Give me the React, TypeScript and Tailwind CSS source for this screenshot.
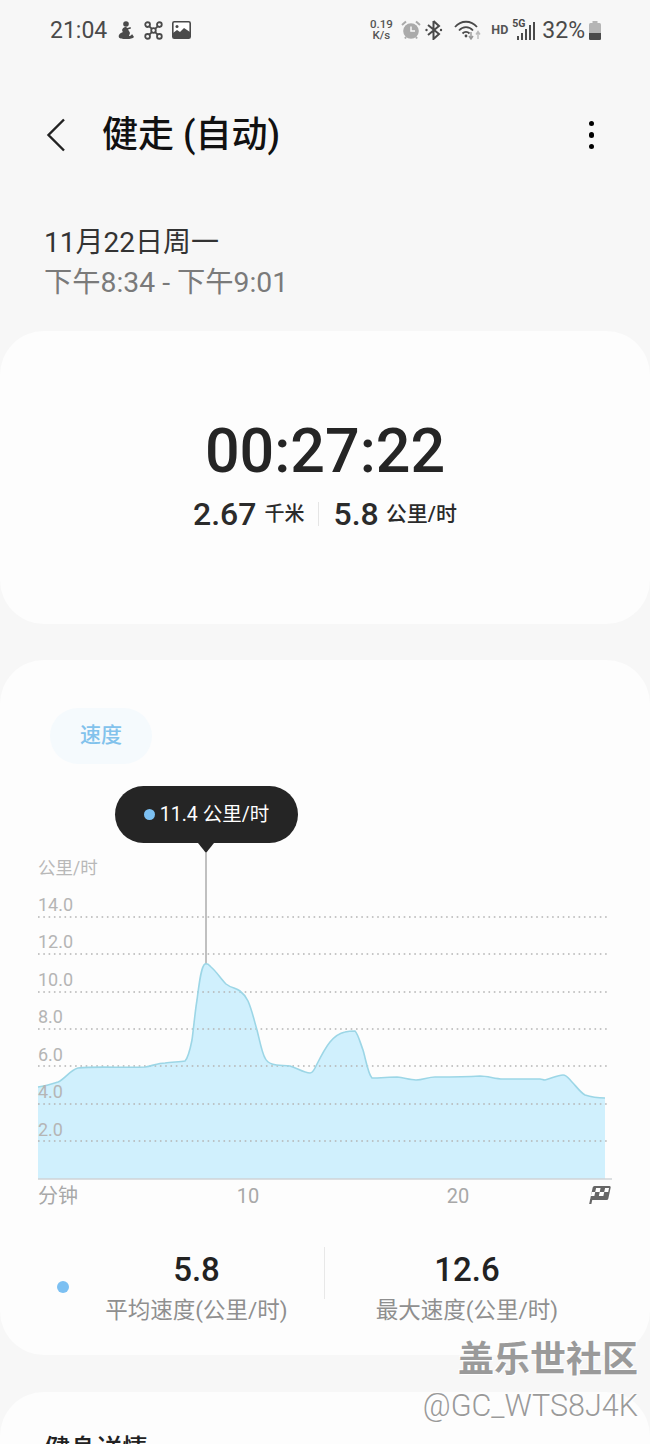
import React from 'react';

const font = { fontFamily: 'Roboto, "Noto Sans CJK SC", sans-serif' };

const curve =
  'M38 1087 C46 1086 52 1084 58 1082 C65 1079 70 1070 78 1068 C95 1066 125 1068 145 1067 C152 1066 158 1063 165 1063 C172 1062 180 1062 185 1061 C188 1058 190 1050 192 1040 C194 1025 195 1012 197 1000 C199 985 201 966 205 964 C208 963 209 965 211 967 C216 971 221 979 226 984 C231 988 236 988 240 991 C244 994 246 997 248 1001 C252 1010 254 1020 257 1030 C260 1042 262 1053 265 1058 C267 1062 269 1063 272 1064 C278 1066 284 1065 290 1066 C297 1068 304 1073 310 1073 C313 1073 314 1070 316 1066 C320 1058 325 1048 330 1042 C335 1036 340 1033 345 1032 C349 1031 352 1031 355 1031 C358 1034 360 1042 363 1050 C366 1060 368 1074 372 1078 C380 1078 390 1077 397 1077 C405 1078 410 1080 416 1080 C423 1080 428 1077 435 1077 C450 1077 465 1077 480 1076 C488 1076 495 1079 503 1079 C515 1079 530 1079 540 1079 C542 1079 543 1080 545 1080 C551 1079 557 1075 563 1075 C567 1075 569 1079 572 1082 C576 1086 580 1092 585 1095 C591 1097 598 1098 605 1098';

const gridYs = [917, 954, 992, 1029, 1066, 1104, 1141];
const yLabels = [
  { t: '14.0', y: 911 },
  { t: '12.0', y: 948 },
  { t: '10.0', y: 986 },
  { t: '8.0', y: 1023 },
  { t: '6.0', y: 1061 },
  { t: '4.0', y: 1098 },
  { t: '2.0', y: 1136 },
];

const StatusBar = () => (
  <div className="flex h-[60px] items-center justify-between pl-[50px] pr-[49px] text-[#4a4a4a]">
    <div className="flex items-center">
      <span className="text-[23px] leading-none">21:04</span>
      {/* figure */}
      <svg viewBox="0 0 16 18" className="ml-[11px] h-[18px] w-[16px]" fill="#4a4a4a">
        <circle cx="8" cy="3" r="2.8" />
        <path d="M7 6 C4 7 3.5 9.5 5 11 C2 12 0 14 1 16.5 C2 18 6 18 9 18 C12 18 15 17.5 16 16 L14 13 C13.5 14.5 12 15 11 15 L12 12 C11.5 10.5 10.5 9.5 10 8.5 L13 7.5 L12.5 6 L9.5 7 C9 6.5 8 6 7 6 Z" />
      </svg>
      {/* nodes */}
      <svg viewBox="0 0 20 20" className="ml-[10px] h-[19px] w-[19px]" fill="none" stroke="#4a4a4a" strokeWidth="1.9">
        <circle cx="10" cy="10" r="2.4" />
        <circle cx="3.8" cy="3.8" r="2.5" />
        <circle cx="16.2" cy="3.8" r="2.5" />
        <circle cx="3.8" cy="16.2" r="2.5" />
        <circle cx="16.2" cy="16.2" r="2.5" />
        <path d="M5.6 5.6 L8.3 8.3 M14.4 5.6 L11.7 8.3 M5.6 14.4 L8.3 11.7 M14.4 14.4 L11.7 11.7" />
      </svg>
      {/* picture */}
      <svg viewBox="0 0 19 18" className="ml-[9px] h-[18px] w-[19px]">
        <rect x="0.8" y="0.8" width="17.4" height="16.4" rx="1.5" fill="#fff" stroke="#4a4a4a" strokeWidth="1.6" />
        <circle cx="5" cy="5.5" r="1.5" fill="#4a4a4a" />
        <path d="M1 15 L1 12 L5 9 L8 11 L12 7 L18 11 L18 17 L1 17 Z" fill="#4a4a4a" />
      </svg>
    </div>
    <div className="flex items-center">
      <div className="flex w-[24px] flex-col items-center text-[11.5px] font-medium leading-[11.5px] text-[#555]">
        <span>0.19</span>
        <span>K/s</span>
      </div>
      {/* alarm */}
      <svg viewBox="0 0 20 20" className="ml-[8px] h-[20px] w-[20px]">
        <circle cx="10" cy="11" r="7.8" fill="#aaa" />
        <path d="M10 6.5 L10 11 L14 11" fill="none" stroke="#f7f7f7" strokeWidth="1.5" />
        <path d="M1 5 L5 1.5 M19 5 L15 1.5 M4 18.5 L5 17 M16 18.5 L15 17" stroke="#aaa" strokeWidth="2" />
      </svg>
      {/* bluetooth */}
      <svg viewBox="0 0 18 20" className="ml-[4px] h-[20px] w-[18px]" fill="none" stroke="#4a4a4a" strokeWidth="2">
        <path d="M8.5 1 L8.5 19 L14 14 L3 5 M8.5 1 L14 6 L3 15" />
        <circle cx="1.5" cy="10" r="1.2" fill="#4a4a4a" stroke="none" />
        <circle cx="16" cy="10" r="1.2" fill="#4a4a4a" stroke="none" />
      </svg>
      {/* wifi */}
      <svg viewBox="0 0 28 20" className="ml-[11px] h-[20px] w-[28px]" fill="none">
        <path d="M1 7 C7 0 17 0 23 7" stroke="#4a4a4a" strokeWidth="1.8" />
        <path d="M5 10.5 C9 6 15 6 19 10.5" stroke="#4a4a4a" strokeWidth="1.8" />
        <path d="M8.5 13.5 C10.5 11.5 13.5 11.5 15.5 13.5" stroke="#4a4a4a" strokeWidth="1.8" />
        <circle cx="12" cy="16" r="1.4" fill="#4a4a4a" />
        <path d="M17 12 L17 18 M15 16 L17 19 L19 16" stroke="#999" strokeWidth="1.4" />
        <path d="M24 19 L24 12 M22 14.5 L24 11.5 L26 14.5" stroke="#bbb" strokeWidth="1.4" />
      </svg>
      <span className="ml-[9px] text-[12.5px] font-bold leading-none text-[#555]">HD</span>
      {/* 5G signal */}
      <div className="relative ml-[4px] h-[20px] w-[24px]">
        <svg viewBox="0 0 24 20" className="h-[20px] w-[24px]" fill="#4a4a4a">
          <rect x="5" y="16" width="2" height="4" />
          <rect x="9" y="13" width="2" height="7" />
          <rect x="13" y="9" width="2" height="11" />
          <rect x="17" y="5" width="2" height="15" />
          <rect x="21" y="2" width="2" height="18" />
        </svg>
        <span className="absolute left-0 top-[-1px] text-[10.5px] font-bold leading-none text-[#4a4a4a]">5G</span>
      </div>
      <span className="ml-[6px] text-[23px] leading-none">32%</span>
      {/* battery */}
      <svg viewBox="0 0 12 19" className="ml-[4px] h-[19px] w-[12px]">
        <rect x="3.5" y="0" width="5" height="2.5" fill="#b5b5b5" />
        <rect x="0" y="2" width="12" height="17" rx="1.5" fill="#b5b5b5" />
        <path d="M0 12 L12 12 L12 17.5 Q12 19 10.5 19 L1.5 19 Q0 19 0 17.5 Z" fill="#4a4a4a" />
      </svg>
    </div>
  </div>
);

const Chart = () => (
  <div className="relative mt-[22px] h-[424px]">
    <div className="absolute left-[115px] top-0 flex h-[57px] w-[183px] items-center justify-center rounded-[29px] bg-[#252525] text-[19.5px] text-white">
      <span className="mr-[5px] h-[11px] w-[11px] rounded-full bg-[#7cc0f2]" />
      <span>11.4 公里/时</span>
    </div>
    <svg viewBox="0 786 650 424" className="block h-[424px] w-[650px]" style={font}>
      <path d="M198 843 L214 843 L206 853 Z" fill="#252525" />
      <path d={`${curve} L605 1179 L38 1179 Z`} fill="#d0f0fd" />
      {gridYs.map((y) => (
        <line key={y} x1="38" x2="608" y1={y} y2={y} stroke="#b4b4b4" strokeWidth="1.6" strokeDasharray="1.6 3.7" />
      ))}
      <line x1="206" x2="206" y1="852" y2="964" stroke="#a5a5a5" strokeWidth="1.4" />
      <path d={curve} fill="none" stroke="#9cd6e6" strokeWidth="1.6" />
      <line x1="38" x2="612" y1="1179" y2="1179" stroke="#cfd3d6" strokeWidth="1.6" />
      <text x="38" y="874" fontSize="17.5" fill="#b8b8b8">公里/时</text>
      {yLabels.map((l) => (
        <text key={l.t} x="38" y={l.y} fontSize="18" fill="#b5b5b5">{l.t}</text>
      ))}
      <text x="38" y="1203" fontSize="20" fill="#a8a8a8">分钟</text>
      <text x="248" y="1203" fontSize="20" fill="#a8a8a8" textAnchor="middle">10</text>
      <text x="458" y="1203" fontSize="20" fill="#a8a8a8" textAnchor="middle">20</text>
      {/* finish flag */}
      <g transform="translate(589 1186) skewX(-12)">
        <rect x="4" y="0" width="18" height="14" rx="1.5" fill="#666" />
        <rect x="7.5" y="2" width="4.5" height="4" fill="#fff" />
        <rect x="16.5" y="2" width="4" height="4" fill="#fff" />
        <rect x="12" y="6" width="4.5" height="4" fill="#fff" />
        <rect x="4" y="6" width="3.5" height="4" fill="#fff" />
        <rect x="4" y="13" width="2.2" height="5" fill="#666" />
      </g>
    </svg>
  </div>
);

const App = () => (
  <div className="relative h-[1444px] w-[650px] overflow-hidden bg-[#f7f7f7]" style={font}>
    <StatusBar />

    {/* title bar */}
    <div className="mt-[44px] flex h-[62px] items-center justify-between pl-[46px] pr-[56px]">
      <div className="flex items-center">
        <svg viewBox="0 0 20 34" className="h-[34px] w-[20px]" fill="none" stroke="#222" strokeWidth="2.4">
          <path d="M18 1.5 L2.5 17 L18 32.5" />
        </svg>
        <span className="ml-[36px] text-[36px] font-medium leading-none text-[#111]">健走 (自动)</span>
      </div>
      <div className="flex flex-col gap-[6px]">
        <span className="h-[5.5px] w-[5.5px] rounded-full bg-black" />
        <span className="h-[5.5px] w-[5.5px] rounded-full bg-black" />
        <span className="h-[5.5px] w-[5.5px] rounded-full bg-black" />
      </div>
    </div>

    {/* date */}
    <div className="mt-[57px] pl-[44px]">
      <div className="text-[28px] leading-[40px] text-[#333]">11月22日周一</div>
      <div className="text-[28.3px] leading-[40px] text-[#7a7a7a]">下午8:34 - 下午9:01</div>
    </div>

    {/* duration card */}
    <div className="mt-[28px] flex h-[293px] flex-col items-center rounded-[44px] bg-[#fdfdfd] pt-[87px]">
      <div className="text-[61px] font-medium leading-[66px] text-[#252525]">00:27:22</div>
      <div className="mt-[14px] flex items-center text-[#2b2b2b]">
        <span className="text-[32px] font-medium leading-none">2.67</span>
        <span className="ml-[8px] text-[20px] font-medium leading-none">千米</span>
        <span className="mx-[14px] h-[24px] w-px bg-[#e5e5e5]" />
        <span className="text-[32px] font-medium leading-none">5.8</span>
        <span className="ml-[7px] text-[21px] font-medium leading-none">公里/时</span>
      </div>
    </div>

    {/* speed card */}
    <div className="mt-[36px] h-[695px] rounded-[44px] bg-[#fdfdfd] pt-[48px]">
      <div className="ml-[50px] flex h-[56px] w-[102px] items-center justify-center rounded-[28px] bg-[#f5fafd] text-[21px] font-medium text-[#82c2ec]">
        速度
      </div>
      <Chart />
      <div className="mt-[36px] flex items-center">
        <span className="ml-[57px] h-[12px] w-[12px] rounded-full bg-[#7cc0f2]" />
        <div className="flex w-[255px] flex-col items-center">
          <span className="text-[33px] font-medium leading-[48px] text-[#222]">5.8</span>
          <span className="text-[22.5px] leading-[33px] text-[#8f8f8f]">平均速度(公里/时)</span>
        </div>
        <span className="mb-[28px] h-[52px] w-px bg-[#e8e8e8]" />
        <div className="flex w-[284px] flex-col items-center">
          <span className="text-[33px] font-medium leading-[48px] text-[#222]">12.6</span>
          <span className="text-[22.5px] leading-[33px] text-[#8f8f8f]">最大速度(公里/时)</span>
        </div>
      </div>
    </div>

    {/* next card, clipped by the window */}
    <div className="mt-[37px] h-[200px] rounded-[44px] bg-[#fdfdfd] pl-[44px] pt-[44px]">
      <span className="text-[26px] font-medium leading-none text-[#222]">健身详情</span>
    </div>

    {/* watermark */}
    <div className="absolute bottom-[20px] right-[12px] flex flex-col items-end text-[#9a9a9a] [text-shadow:1px_1px_0_#fff,-1px_-1px_0_#fff]">
      <span className="text-[36px] font-bold leading-[44px]">盖乐世社区</span>
      <span className="mt-[6px] text-[30.5px] font-light leading-[36px]">@GC_WTS8J4K</span>
    </div>
  </div>
);

export default App;
